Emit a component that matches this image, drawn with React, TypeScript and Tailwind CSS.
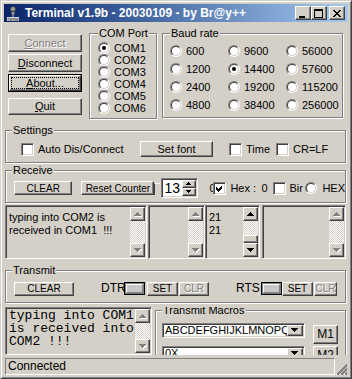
import React from "react";

const FACE = "bg-[#d4d0c8]";
const RAISED =
  "border border-t-white border-l-white border-r-[#404040] border-b-[#404040] shadow-[inset_-1px_-1px_0_#808080]";
const SUNKEN =
  "border border-t-[#808080] border-l-[#808080] border-r-white border-b-white shadow-[inset_1px_1px_0_#404040,inset_-1px_-1px_0_#d4d0c8]";
const CHECKER =
  "bg-[image:repeating-conic-gradient(#fff_0_25%,#d4d0c8_0_50%)] bg-[length:2px_2px]";

// pixel triangle like the classic scroll arrows
function Arrow({ dir, disabled = false, small = false }: { dir: "up" | "down"; disabled?: boolean; small?: boolean }) {
  const rows = small ? [[2, 1], [1, 3], [0, 5]] : [[3, 1], [2, 3], [1, 5], [0, 7]];
  const r = dir === "up" ? rows : [...rows].reverse();
  const w = small ? 6 : 8;
  const h = small ? 4 : 5;
  return (
    <svg width={w} height={h} viewBox={`0 0 ${w} ${h}`} shapeRendering="crispEdges">
      {disabled &&
        r.map(([x, rw], i) => <rect key={"s" + i} x={x + 1} y={i + 1} width={rw} height={1} fill="#fff" />)}
      {r.map(([x, rw], i) => (
        <rect key={i} x={x} y={i} width={rw} height={1} fill={disabled ? "#808080" : "#000"} />
      ))}
    </svg>
  );
}

function Button({
  label,
  className = "",
  disabled = false,
  small = false,
  isDefault = false,
}: {
  label: React.ReactNode;
  className?: string;
  disabled?: boolean;
  small?: boolean;
  isDefault?: boolean;
}) {
  const txt = disabled ? "text-[#808080] [text-shadow:1px_1px_0_#fff]" : "text-black";
  const size = small ? "text-[10px]" : "text-[11px]";
  if (isDefault) {
    return (
      <div className={`border border-black ${FACE} ${className}`}>
        <div className={`${RAISED} h-full p-[1px]`}>
          <div className="h-full border border-dotted border-black flex items-center justify-center">{label}</div>
        </div>
      </div>
    );
  }
  return (
    <div className={`${RAISED} ${FACE} flex items-center justify-center whitespace-nowrap ${size} ${txt} ${className}`}>
      {label}
    </div>
  );
}

function Group({
  title,
  className = "",
  labelClass = "left-[6px]",
  children,
}: {
  title: string;
  className?: string;
  labelClass?: string;
  children?: React.ReactNode;
}) {
  return (
    <div className={`relative shrink-0 border border-[#808080] shadow-[inset_1px_1px_0_#fff,1px_1px_0_#fff] ${className}`}>
      <span className={`absolute top-[-7px] ${labelClass} bg-[#d4d0c8] px-[1px] leading-[13px] whitespace-nowrap`}>
        {title}
      </span>
      {children}
    </div>
  );
}

function RadioDot({ checked = false }: { checked?: boolean }) {
  return (
    <span className="block shrink-0 w-[12px] h-[12px] rounded-full border border-t-[#808080] border-l-[#808080] border-b-white border-r-white">
      <span className="flex w-full h-full rounded-full border border-t-[#404040] border-l-[#404040] border-b-[#d4d0c8] border-r-[#d4d0c8] bg-white items-center justify-center">
        {checked && <span className="block w-[4px] h-[4px] rounded-full bg-black" />}
      </span>
    </span>
  );
}

function Radio({ label, checked = false, className = "" }: { label: string; checked?: boolean; className?: string }) {
  return (
    <div className={`flex items-center ${className}`}>
      <RadioDot checked={checked} />
      <span className="ml-[4px]">{label}</span>
    </div>
  );
}

function CheckBox({ checked = false }: { checked?: boolean }) {
  return (
    <span className={`${SUNKEN} shrink-0 bg-white w-[13px] h-[13px] flex items-center justify-center`}>
      {checked && (
        <svg width="7" height="7" viewBox="0 0 7 7" shapeRendering="crispEdges">
          <path d="M0 2 L2 4 L6 0 L6 3 L2 7 L0 5 Z" fill="#000" />
        </svg>
      )}
    </span>
  );
}

function Check({ label, checked = false, className = "" }: { label: string; checked?: boolean; className?: string }) {
  return (
    <div className={`flex items-center shrink-0 ${className}`}>
      <CheckBox checked={checked} />
      <span className="ml-[4px] whitespace-nowrap">{label}</span>
    </div>
  );
}

function ScrollBtn({ dir, disabled }: { dir: "up" | "down"; disabled: boolean }) {
  return (
    <div className={`${RAISED} ${FACE} h-[14px] shrink-0 flex items-center justify-center`}>
      <Arrow dir={dir} disabled={disabled} />
    </div>
  );
}

function VScroll({ disabled = true, thumb = false }: { disabled?: boolean; thumb?: boolean }) {
  return (
    <div className="w-[15px] h-full shrink-0 flex flex-col">
      <ScrollBtn dir="up" disabled={disabled} />
      <div className={`flex-1 flex flex-col justify-end ${CHECKER}`}>
        {thumb && <div className={`${RAISED} ${FACE} h-[8px]`} />}
      </div>
      <ScrollBtn dir="down" disabled={disabled} />
    </div>
  );
}

function Memo({
  className = "",
  lines = [],
  disabled = true,
  thumb = false,
  mono = false,
}: {
  className?: string;
  lines?: string[];
  disabled?: boolean;
  thumb?: boolean;
  mono?: boolean;
}) {
  return (
    <div className={`${SUNKEN} ${FACE} p-[1px] flex shrink-0 h-full ${className}`}>
      <div
        className={
          mono
            ? "flex-1 overflow-hidden pl-[2px] font-['Liberation_Mono','Courier_New',monospace] text-[13px] leading-[13px] whitespace-pre"
            : "flex-1 overflow-hidden pl-[2px] pt-[4px] whitespace-pre"
        }
      >
        {lines.map((l, i) => (
          <div key={i}>{l}</div>
        ))}
      </div>
      <VScroll disabled={disabled} thumb={thumb} />
    </div>
  );
}

function Led({ className = "" }: { className?: string }) {
  return (
    <div className={`w-[21px] h-[13px] shrink-0 border border-black bg-[#808080] p-[1px] ${className}`}>
      <div className="h-full border border-t-white border-l-white border-r-[#808080] border-b-[#808080] bg-[#c8c8c8]" />
    </div>
  );
}

function Combo({ text, className = "" }: { text: string; className?: string }) {
  return (
    <div className={`${SUNKEN} bg-white w-[143px] h-[15px] p-[1px] flex ${className}`}>
      <div className="flex-1 overflow-hidden whitespace-nowrap pl-[1px] leading-[11px]">{text}</div>
      <div className={`${RAISED} ${FACE} w-[16px] flex items-center justify-center`}>
        <Arrow dir="down" />
      </div>
    </div>
  );
}

function TitleIcon() {
  return (
    <svg width="16" height="16" viewBox="0 0 16 16">
      <circle cx="8" cy="4" r="2.5" fill="#9a9a9a" stroke="#404040" strokeWidth="0.8" />
      <path d="M6 7 L10 7 L9 10 L7 10 Z" fill="#b0b0b0" stroke="#404040" strokeWidth="0.6" />
      <path d="M8 10 L8 12" stroke="#c0c0c0" strokeWidth="1" />
      <rect x="2" y="12" width="12" height="4" fill="#d0d0d0" />
      <text x="8" y="15.5" fontSize="4" textAnchor="middle" fill="#202020" fontFamily="Liberation Sans, sans-serif">
        TERM
      </text>
    </svg>
  );
}

function TitleButton({ kind }: { kind: "min" | "max" | "close" }) {
  return (
    <div className={`${RAISED} ${FACE} w-[16px] h-[14px] shrink-0 flex items-center justify-center`}>
      <svg width="10" height="9" viewBox="0 0 10 9" shapeRendering="crispEdges">
        {kind === "min" && <rect x="1" y="7" width="6" height="2" fill="#000" />}
        {kind === "max" && (
          <>
            <rect x="0" y="0" width="9" height="2" fill="#000" />
            <rect x="0" y="0" width="1" height="9" fill="#000" />
            <rect x="8" y="0" width="1" height="9" fill="#000" />
            <rect x="0" y="8" width="9" height="1" fill="#000" />
          </>
        )}
        {kind === "close" &&
          [
            [0, 6],
            [1, 5],
            [2, 4],
            [3, 3],
            [2, 4],
            [1, 5],
            [0, 6],
          ].map(([a, b], i) => (
            <React.Fragment key={i}>
              <rect x={a + 1} y={i + 1} width={2} height={1} fill="#000" />
              <rect x={b + 1} y={i + 1} width={2} height={1} fill="#000" />
            </React.Fragment>
          ))}
      </svg>
    </div>
  );
}

export default function App() {
  const bauds = ["600", "9600", "56000", "1200", "14400", "57600", "2400", "19200", "115200", "4800", "38400", "256000"];
  return (
    <div className="w-[352px] h-[379px] overflow-hidden bg-[#d4d0c8] font-['Liberation_Sans',Arial,sans-serif] text-[11px] leading-[13px] text-black">
      <div className="w-full h-full border border-t-[#d4d0c8] border-l-[#d4d0c8] border-r-[#404040] border-b-[#404040] shadow-[inset_1px_1px_0_#fff,inset_-1px_-1px_0_#808080] p-[3px] flex flex-col">
        {/* title bar */}
        <div className="h-[18px] shrink-0 flex items-center bg-linear-to-r from-[#0a246a] to-[#a6caf0]">
          <div className="ml-[1px] w-[16px] h-[16px]">
            <TitleIcon />
          </div>
          <span className="ml-[4px] text-white font-bold text-[12px] leading-[14px] whitespace-nowrap">
            Terminal v1.9b - 20030109 - by Br@y++
          </span>
          <div className="ml-auto mr-[3px] flex items-center">
            <TitleButton kind="min" />
            <TitleButton kind="max" />
            <div className="ml-[2px]">
              <TitleButton kind="close" />
            </div>
          </div>
        </div>

        {/* client */}
        <div className="flex-1 flex flex-col">
          <div className="mt-[11px] h-[86px] flex shrink-0">
            <div className="ml-[4px] w-[74px] pt-[1px] flex flex-col shrink-0">
              <Button disabled className="h-[18px]" label={<><u>C</u>onnect</>} />
              <Button className="h-[18px] mt-[2px]" label={<><u>D</u>isconnect</>} />
              <Button isDefault className="h-[18px] mt-[2px]" label={<><u>A</u>bout...</>} />
              <Button className="h-[17px] mt-[6px]" label={<><u>Q</u>uit</>} />
            </div>
            <Group title="COM Port" labelClass="left-[8px]" className="ml-[7px] w-[68px] h-[86px] pl-[8px] pt-[8px]">
              {["COM1", "COM2", "COM3", "COM4", "COM5", "COM6"].map((c, i) => (
                <Radio key={c} label={c} checked={i === 0} className="h-[12px] whitespace-nowrap" />
              ))}
            </Group>
            <Group title="Baud rate" labelClass="left-[7px]" className="ml-[5px] w-[181px] h-[85px] pl-[7px] pt-[8px]">
              <div className="grid grid-cols-[58px_58px_58px]">
                {bauds.map((b) => (
                  <Radio key={b} label={b} checked={b === "14400"} className="h-[18px]" />
                ))}
              </div>
            </Group>
          </div>

          <Group title="Settings" className="ml-[1px] mt-[11px] w-[341px] h-[33px] pt-[5px] flex items-center">
            <div className="ml-[15px] w-[119px] flex">
              <Check label="Auto Dis/Connect" />
            </div>
            <Button className="w-[73px] h-[16px]" label="Set font" />
            <Check label="Time" className="ml-[16px] w-[47px]" />
            <Check label="CR=LF" />
          </Group>

          <Group title="Receive" className="ml-[1px] mt-[7px] w-[341px] h-[33px] pt-[3px] flex items-center">
            <Button small className="ml-[8px] w-[60px] h-[14px]" label="CLEAR" />
            <Button small className="ml-[9px] w-[75px] h-[14px]" label="Reset Counter" />
            <div className="w-[6px] h-[12px] mt-[2px] shrink-0 border-t border-t-white border-l border-l-[#404040]" />
            <div className={`${SUNKEN} bg-white w-[37px] h-[20px] p-[1px] flex shrink-0 ml-[1px]`}>
              <span className="flex-1 text-[14px] leading-[16px] pl-[1px]">13</span>
              <div className="w-[14px] flex flex-col">
                <div className={`${RAISED} ${FACE} flex-1 flex items-center justify-center`}>
                  <Arrow dir="up" small />
                </div>
                <div className={`${RAISED} ${FACE} flex-1 flex items-center justify-center`}>
                  <Arrow dir="down" small />
                </div>
              </div>
            </div>
            <span className="ml-[11px] w-[4px] shrink-0">0</span>
            <Check checked label="Hex :" className="w-[48px]" />
            <span className="w-[12px] shrink-0">0</span>
            <div className="w-[32px] shrink-0 flex items-center">
              <CheckBox />
              <span className="ml-[3px]">Bir</span>
            </div>
            <div className="flex items-center shrink-0">
              <RadioDot />
              <span className="ml-[5px]">HEX</span>
            </div>
          </Group>

          <div className="ml-[1px] mt-[2px] h-[54px] flex shrink-0">
            <Memo className="w-[142px]" lines={["typing into COM2 is", "received in COM1  !!!"]} />
            <Memo className="ml-[1px] w-[57px]" />
            <Memo className="w-[55px]" lines={["21", "21"]} disabled={false} thumb />
            <Memo className="ml-[2px] w-[84px]" />
          </div>

          <Group title="Transmit" className="ml-[1px] mt-[11px] w-[341px] h-[33px] pt-[4px] flex items-center">
            <Button small className="ml-[8px] w-[60px] h-[14px]" label="CLEAR" />
            <span className="ml-[27px] w-[23px] shrink-0 text-[12px]">DTR</span>
            <Led />
            <Button small className="ml-[2px] w-[31px] h-[14px]" label="SET" />
            <Button small disabled className="ml-[1px] w-[30px] h-[14px]" label="CLR" />
            <span className="ml-[27px] w-[25px] shrink-0 text-[12px]">RTS</span>
            <Led />
            <Button small className="w-[31px] h-[14px]" label="SET" />
            <Button small disabled className="ml-[1px] w-[23px] h-[14px]" label="CLR" />
          </Group>

          <div className="ml-[1px] mt-[4px] h-[48px] flex overflow-hidden shrink-0">
            <Memo mono className="w-[147px]" lines={["typing into COM1", "is received into", "COM2 !!!"]} />
            <Group title="Transmit Macros" className="ml-[3px] mt-[3px] w-[191px] h-[80px] flex">
              <div className="pl-[6px] pt-[12px] flex flex-col">
                <Combo text="ABCDEFGHIJKLMNOPQR" />
                <Combo text="0X" className="mt-[8px]" />
              </div>
              <div className="ml-[8px] pt-[14px] flex flex-col">
                <Button className="w-[25px] h-[19px] text-[12px]" label="M1" />
                <Button className="w-[25px] h-[19px] mt-[2px] text-[12px]" label="M2" />
              </div>
            </Group>
          </div>

          <div className="ml-[1px] mt-[3px] w-[342px] h-[17px] flex shrink-0">
            <div className="flex-1 border border-t-[#808080] border-l-[#808080] border-r-white border-b-white pl-[2px] flex items-center text-[12px]">
              Connected
            </div>
            <div className="w-[12px] flex items-end justify-end">
              <svg width="12" height="12" viewBox="0 0 12 12" shapeRendering="crispEdges">
                {[0, 4, 8].map((o) => (
                  <React.Fragment key={o}>
                    <line x1={o + 1} y1="12" x2="12" y2={o + 1} stroke="#fff" strokeWidth="1" />
                    <line x1={o + 2} y1="12" x2="12" y2={o + 2} stroke="#808080" strokeWidth="1.5" />
                  </React.Fragment>
                ))}
              </svg>
            </div>
          </div>
        </div>
      </div>
    </div>
  );
}
